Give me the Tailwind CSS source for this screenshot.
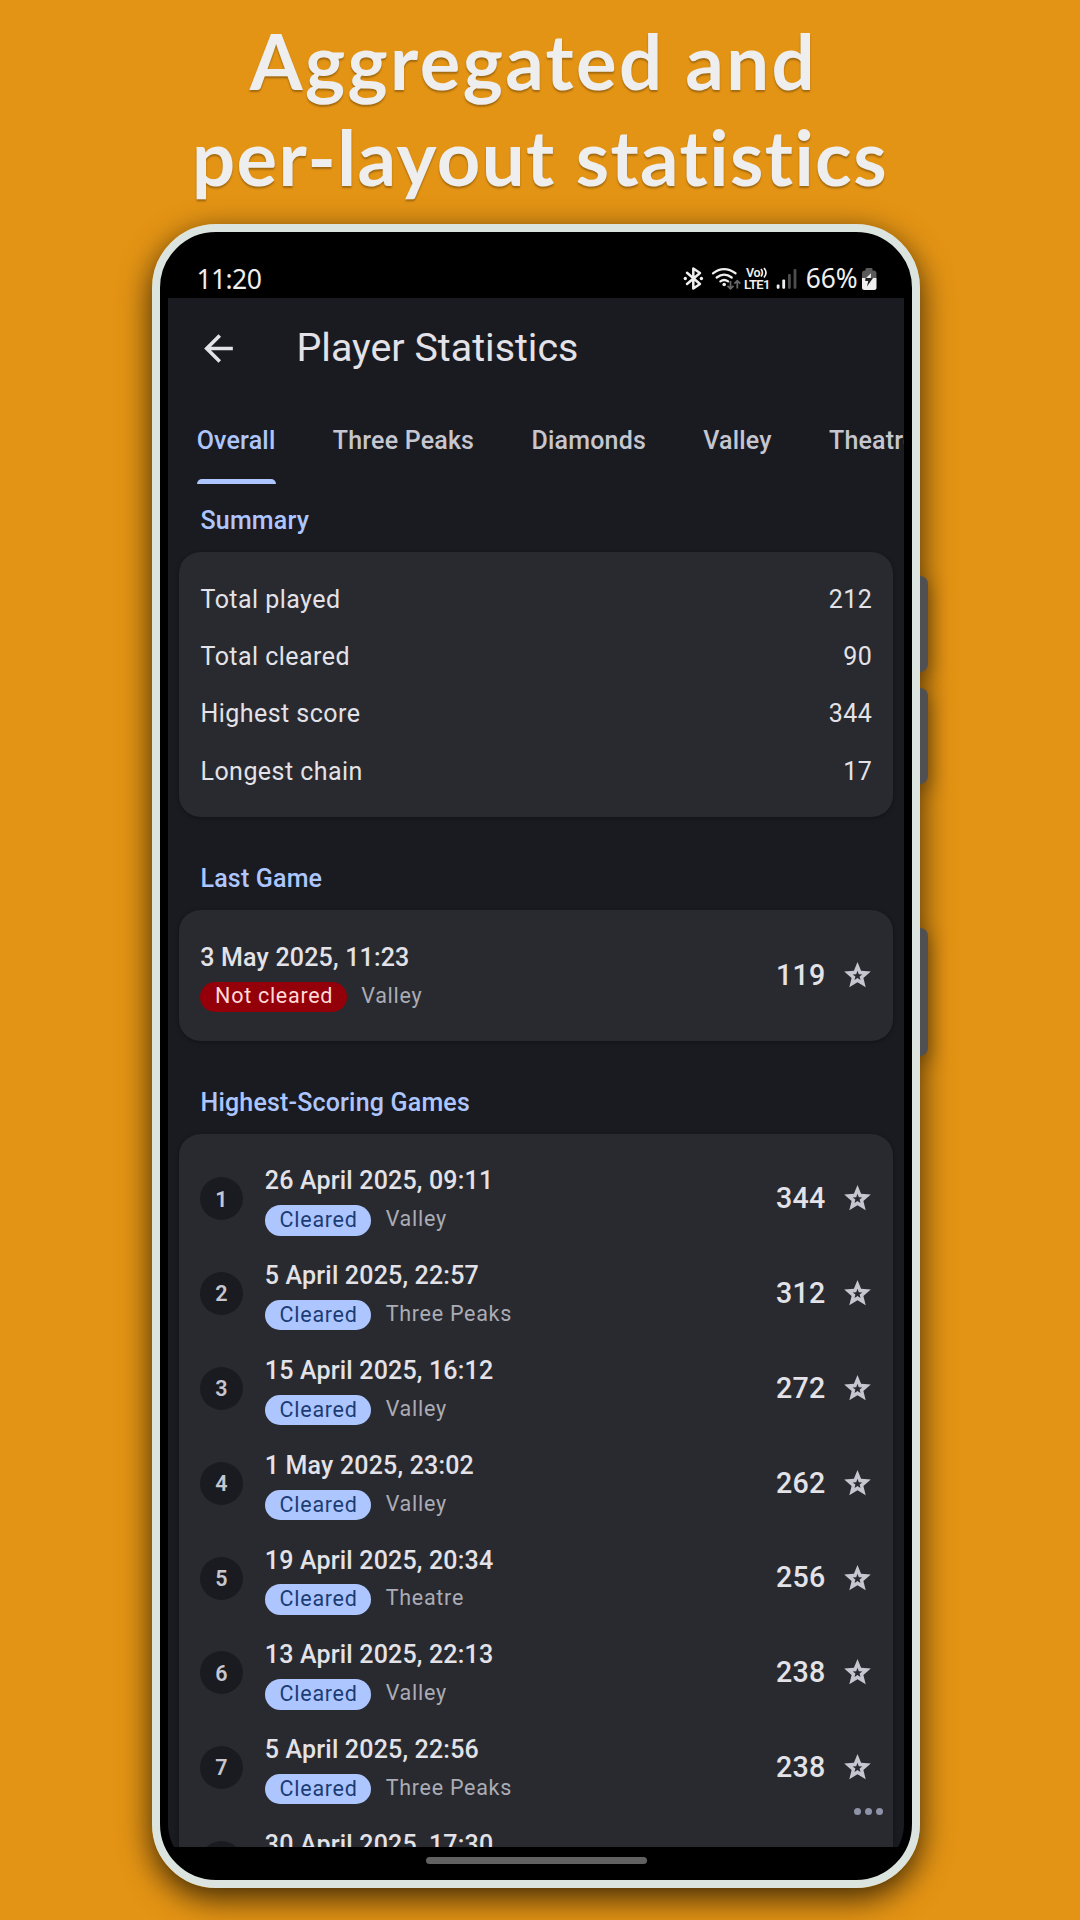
<!DOCTYPE html>
<html lang="en">
<head>
<meta charset="utf-8">
<title>Player Statistics</title>
<script src="https://cdn.jsdelivr.net/npm/@tailwindcss/browser@4"></script>
</head>
<body class="w-[1080px] h-[1920px] overflow-hidden bg-[#e49414] font-[Roboto,sans-serif]">
<div class="flex h-[1920px] flex-col items-center overflow-hidden">
  <h1 class="flex h-[224px] shrink-0 flex-col items-center pt-[13px] font-[Lato,sans-serif] text-[76px] font-bold leading-[96px] text-[#eeeeee] [text-shadow:0_2px_2px_rgba(0,0,0,0.3)]">
    <span class="mr-[13px] tracking-[2.400px] whitespace-nowrap">Aggregated and</span>
    <span class="tracking-[1.4px] whitespace-nowrap">per-layout statistics</span>
  </h1>
  <div class="relative ml-[-8px] h-[1664px] w-[768px] shrink-0">
    <div class="absolute inset-0 rounded-[64px] shadow-[0_10px_32px_rgba(0,0,0,0.75)]"></div>
    <div class="absolute left-[760px] top-[352px] h-24 w-4 rounded-lg bg-[#505052] shadow-[0_6px_20px_rgba(0,0,0,0.4)]"></div>
    <div class="absolute left-[760px] top-[464px] h-24 w-4 rounded-lg bg-[#505052] shadow-[0_6px_20px_rgba(0,0,0,0.4)]"></div>
    <div class="absolute left-[760px] top-[704px] h-32 w-4 rounded-lg bg-[#505052] shadow-[0_6px_20px_rgba(0,0,0,0.4)]"></div>
    <div class="relative h-full rounded-[64px] border-8 border-[#dbe4de] bg-black p-2">
      <div class="flex h-full flex-col overflow-hidden rounded-b-[48px]">
        <!-- status bar -->
        <div class="flex h-[58px] shrink-0 items-end justify-between pl-[28.500px] pr-[27px] text-[#efefef]">
          <span id="clock" class="font-[Noto_Sans,sans-serif] text-[26.5px] leading-[38px] tracking-[-0.6px]">11:20</span>
          <svg class="mb-[5px] h-[30px] w-[196px] overflow-visible" viewBox="0 0 196 30" fill="none">
            <path d="M6 9.800l13 11.200-6.700 4.500V5.500L19 10 6 21" stroke="#efefef" stroke-width="2.500" stroke-linecap="round" stroke-linejoin="round"/>
            <circle cx="4.300" cy="15.500" r="1.700" fill="#efefef"/><circle cx="20.400" cy="15.500" r="1.700" fill="#efefef"/>
            <g stroke="#efefef" stroke-width="2.300" stroke-linecap="round">
              <path d="M32 10.300q11-8.300 22.500 0M35.700 14.500q7.500-5.800 15 0M39.400 18.400q3.800-2.800 7.700 0"/>
            </g>
            <circle cx="43.200" cy="21.500" r="1.800" fill="#efefef"/>
            <g stroke="#666" stroke-width="1.800"><path d="M49.500 18v7.500m-3-2.700 3 3 3-3M56.300 25.500V18m-3 2.700 3-3 3 3"/></g>
            <text x="65" y="14.300" font-family="Roboto" font-size="12.500" font-weight="600" fill="#efefef" textLength="14.500">Vo</text>
            <path d="M80 6q2.800 3.700 0 7.500M83 5q4 4.700 0 9.500" stroke="#efefef" stroke-width="1.700"/>
            <text x="63" y="26" font-family="Roboto" font-size="13" font-weight="600" fill="#efefef" textLength="26.500">LTE1</text>
            <g fill="#efefef"><rect x="95.700" y="21.500" width="2.800" height="4.300" rx="1"/><rect x="101.300" y="16.500" width="2.800" height="9.300" rx="1"/></g>
            <g fill="#4d4d4d"><rect x="107" y="11" width="2.800" height="14.800" rx="1"/><rect x="112.600" y="6" width="2.800" height="19.800" rx="1"/></g>
            <text x="124.700" y="25.300" font-family="Noto Sans" font-size="26.500" fill="#efefef" textLength="52" lengthAdjust="spacingAndGlyphs">66%</text>
            <path d="M185.500 5h5q1 0 1 1V7.500h1q3 0 3 3V15.500H181v-5q0-3 3-3h.500V6q0-1 1-1z" fill="#5a5a5a"/>
            <path d="M181 15h14.500v9.500q0 2.500-2.500 2.500h-9.500q-2.500 0-2.500-2.500z" fill="#efefef"/>
            <path d="M190 10.300l-5.200 4.900h5z" fill="#efefef"/><path d="M184.500 15h7.500l-6 8.500 1.200-5.500h-3z" fill="#222"/>
          </svg>
        </div>
        <div class="relative flex h-[1549px] shrink-0 flex-col overflow-hidden bg-[#1a1b20]">
          <div class="flex h-[100.200px] shrink-0 items-center pl-[28.500px]">
            <svg class="h-[43px] w-[43px]" viewBox="0 0 24 24" fill="#e3e2e8"><path d="M20 11H7.830l5.590-5.590L12 4l-8 8 8 8 1.410-1.410L7.830 13H20v-2z"/></svg>
            <div id="title" class="ml-[57px] text-[39.400px] leading-[50px] text-[#e3e2e8] whitespace-nowrap">Player Statistics</div>
          </div>
          <div class="flex h-[86px] shrink-0 gap-[57.300px] whitespace-nowrap pl-[28.700px] text-[25px] font-medium leading-[86px] tracking-[0.190px] text-[#c5c6d0]">
            <div class="relative text-[#aec6ff]">Overall<div class="absolute inset-x-0 bottom-0 h-[5.500px] rounded-t-[5.500px] bg-[#aec6ff]"></div></div>
            <div>Three Peaks</div><div>Diamonds</div><div>Valley</div><div>Theatre</div>
          </div>
          <div class="flex flex-col px-[11px] pt-[18px]">
            <h2 class="mb-[12px] pl-[21.500px] text-[25px] font-medium leading-[37.800px] tracking-[0.180px] text-[#aec6ff]">Summary</h2>
            <div class="rounded-[21.500px] bg-[#292a2f] pl-[21.500px] pr-[20.800px] pt-[18.700px] pb-[17.300px] text-[25px] leading-[57.300px] tracking-[0.450px] text-[#e3e2e8] shadow-[0_1px_4px_rgba(0,0,0,0.35)]">
              <div class="flex justify-between"><span>Total played</span><span>212</span></div>
              <div class="flex justify-between"><span>Total cleared</span><span>90</span></div>
              <div class="flex justify-between"><span>Highest score</span><span>344</span></div>
              <div class="flex justify-between"><span>Longest chain</span><span>17</span></div>
            </div>
            <h2 class="mb-[12px] mt-[43px] pl-[21.500px] text-[25px] font-medium leading-[37.800px] tracking-[0.180px] text-[#aec6ff]">Last Game</h2>
            <div id="last" class="rounded-[21.500px] bg-[#292a2f] pl-[21.300px] pr-[21px] py-[18px] shadow-[0_1px_4px_rgba(0,0,0,0.35)]"></div>
            <h2 class="mb-[12px] mt-[43px] pl-[21.500px] text-[25px] font-medium leading-[37.800px] tracking-[0.180px] text-[#aec6ff]">Highest-Scoring Games</h2>
            <div id="top" class="rounded-[21.500px] bg-[#292a2f] px-[21px] py-[18px] shadow-[0_1px_4px_rgba(0,0,0,0.35)]"></div>
          </div>
          <div class="absolute right-[21px] bottom-[32px] flex gap-[3.500px]">
            <i class="size-[7.300px] rounded-full bg-[#8e93a9]"></i><i class="size-[7.300px] rounded-full bg-[#8e93a9]"></i><i class="size-[7.300px] rounded-full bg-[#8e93a9]"></i>
          </div>
        </div>
        <div class="flex justify-center pt-[10px]"><div class="h-[7.300px] w-[221px] rounded-full bg-[#616161]"></div></div>
      </div>
    </div>
  </div>
</div>
<script>
const row = (rank, date, cleared, layout, score) => `
<div class="flex h-[94.800px] items-center">
  ${rank ? `<div class="mr-[21.800px] flex size-[43px] shrink-0 items-center justify-center rounded-full bg-[#1a1b20] text-[21.500px] font-semibold leading-none text-[#c5c6d0]"><span class="mt-[1px]">${rank}</span></div>` : ''}
  <div class="flex flex-1 flex-col gap-[5px] whitespace-nowrap">
    <div class="text-[25px] font-medium leading-[37.800px] tracking-[0.180px] text-[#e3e2e8]">${date}</div>
    <div class="flex items-center gap-[14.300px] text-[21.500px] leading-[30.400px] tracking-[0.720px]">
      ${cleared ? '<span class="h-[30.400px] rounded-full bg-[#aec6ff] pl-[14.800px] pr-[13.800px] leading-[29.200px] text-[#1b3c74]">Cleared</span>'
                : '<span class="h-[30.400px] rounded-full bg-[#93000a] pl-[14.800px] pr-[13.800px] leading-[28.600px] text-[#ffdad6]">Not cleared</span>'}
      <span class="h-[30.400px] leading-[28.600px] text-[#abacb5]">${layout}</span>
    </div>
  </div>
  <div class="mb-[1px] text-[28.600px] font-medium leading-none tracking-[0.270px] text-[#e3e2e8]">${score}</div>
  <svg class="mb-[1px] ml-[18.500px] mr-[1px] h-[26px] w-[27px]" viewBox="0 0 27 26"><path fill="#c5c6d0" fill-rule="evenodd" d="M13.500 0l3.600 8.800 9.700.8-7.400 6.300 2.300 9.400-8.200-5-8.200 5 2.300-9.400L.200 9.600l9.700-.8zM13.500 8.800l-1.300 3.400-3.500.2 2.700 2.200-.9 3.400 3-1.900 3 1.900-.9-3.400 2.700-2.200-3.500-.2z"/></svg>
</div>`;
document.getElementById('last').innerHTML = row(0, '3 May 2025, 11:23', false, 'Valley', 119);
document.getElementById('top').innerHTML = [
  ['26 April 2025, 09:11', 'Valley', 344], ['5 April 2025, 22:57', 'Three Peaks', 312],
  ['15 April 2025, 16:12', 'Valley', 272], ['1 May 2025, 23:02', 'Valley', 262],
  ['19 April 2025, 20:34', 'Theatre', 256], ['13 April 2025, 22:13', 'Valley', 238],
  ['5 April 2025, 22:56', 'Three Peaks', 238], ['30 April 2025, 17:30', 'Valley', 236]
].map((g, i) => row(i + 1, g[0], true, g[1], g[2])).join('');
</script>
</body>
</html>
